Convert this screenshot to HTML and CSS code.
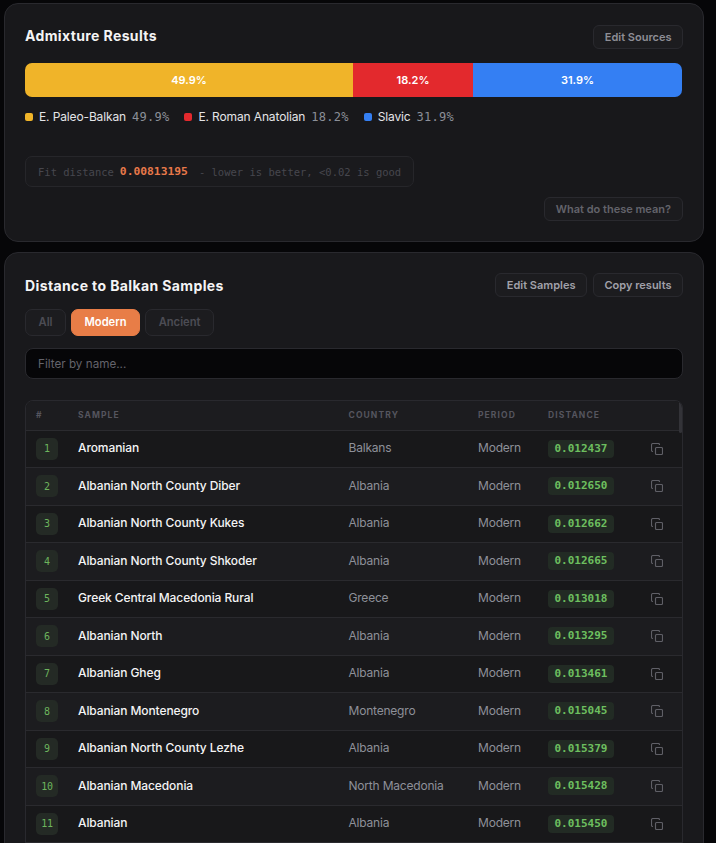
FILE: index.html
```html
<!DOCTYPE html>
<html lang="en">
<head>
<meta charset="utf-8">
<title>Admixture Results</title>
<link rel="stylesheet" href="styles.css">
</head>
<body>
<svg class="defs" width="0" height="0"><defs><g id="copy"><rect x="4.5" y="4.5" width="7" height="7" rx="1"/><path d="M2 8.5H1.8A1.3 1.3 0 0 1 .5 7.2V2A1.5 1.5 0 0 1 2 .5H7.2A1.3 1.3 0 0 1 8.5 1.8V2"/></g></defs></svg>
<main class="page">
  <section class="card card-results">
    <header class="card-head">
      <h2>Admixture Results</h2>
      <button class="btn">Edit Sources</button>
    </header>
    <div class="bar">
      <div class="seg seg-y">49.9%</div>
      <div class="seg seg-r">18.2%</div>
      <div class="seg seg-b">31.9%</div>
    </div>
    <ul class="legend">
      <li><i class="dot dot-y"></i>E. Paleo-Balkan <b>49.9%</b></li>
      <li><i class="dot dot-r"></i>E. Roman Anatolian <b>18.2%</b></li>
      <li><i class="dot dot-b"></i>Slavic <b>31.9%</b></li>
    </ul>
    <div class="fit">Fit distance <strong>0.00813195</strong> <span>- lower is better, &lt;0.02 is good</span></div>
    <div class="help"><button class="btn btn-dim">What do these mean?</button></div>
  </section>
  <section class="card card-samples">
    <header class="card-head">
      <h2>Distance to Balkan Samples</h2>
      <div class="actions"><button class="btn btn-bright">Edit Samples</button><button class="btn btn-bright">Copy results</button></div>
    </header>
    <div class="tabs"><button class="tab">All</button><button class="tab tab-on">Modern</button><button class="tab">Ancient</button></div>
    <input class="filter" placeholder="Filter by name...">
    <div class="table-wrap">
      <div class="scroll"></div>
      <table>
        <colgroup><col class="c1"><col class="c2"><col class="c3"><col class="c4"><col class="c5"><col></colgroup>
        <thead><tr><th>#</th><th>Sample</th><th>Country</th><th>Period</th><th>Distance</th><th></th></tr></thead>
        <tbody>
          <tr><td><span class="rank">1</span></td><td class="name">Aromanian</td><td>Balkans</td><td>Modern</td><td class="dist-cell"><span class="dist">0.012437</span></td><td><svg class="ico" viewBox="0 0 12 12"><use href="#copy"/></svg></td></tr>
          <tr><td><span class="rank">2</span></td><td class="name">Albanian North County Diber</td><td>Albania</td><td>Modern</td><td class="dist-cell"><span class="dist">0.012650</span></td><td><svg class="ico" viewBox="0 0 12 12"><use href="#copy"/></svg></td></tr>
          <tr><td><span class="rank">3</span></td><td class="name">Albanian North County Kukes</td><td>Albania</td><td>Modern</td><td class="dist-cell"><span class="dist">0.012662</span></td><td><svg class="ico" viewBox="0 0 12 12"><use href="#copy"/></svg></td></tr>
          <tr><td><span class="rank">4</span></td><td class="name">Albanian North County Shkoder</td><td>Albania</td><td>Modern</td><td class="dist-cell"><span class="dist">0.012665</span></td><td><svg class="ico" viewBox="0 0 12 12"><use href="#copy"/></svg></td></tr>
          <tr><td><span class="rank">5</span></td><td class="name">Greek Central Macedonia Rural</td><td>Greece</td><td>Modern</td><td class="dist-cell"><span class="dist">0.013018</span></td><td><svg class="ico" viewBox="0 0 12 12"><use href="#copy"/></svg></td></tr>
          <tr><td><span class="rank">6</span></td><td class="name">Albanian North</td><td>Albania</td><td>Modern</td><td class="dist-cell"><span class="dist">0.013295</span></td><td><svg class="ico" viewBox="0 0 12 12"><use href="#copy"/></svg></td></tr>
          <tr><td><span class="rank">7</span></td><td class="name">Albanian Gheg</td><td>Albania</td><td>Modern</td><td class="dist-cell"><span class="dist">0.013461</span></td><td><svg class="ico" viewBox="0 0 12 12"><use href="#copy"/></svg></td></tr>
          <tr><td><span class="rank">8</span></td><td class="name">Albanian Montenegro</td><td>Montenegro</td><td>Modern</td><td class="dist-cell"><span class="dist">0.015045</span></td><td><svg class="ico" viewBox="0 0 12 12"><use href="#copy"/></svg></td></tr>
          <tr><td><span class="rank">9</span></td><td class="name">Albanian North County Lezhe</td><td>Albania</td><td>Modern</td><td class="dist-cell"><span class="dist">0.015379</span></td><td><svg class="ico" viewBox="0 0 12 12"><use href="#copy"/></svg></td></tr>
          <tr><td><span class="rank">10</span></td><td class="name">Albanian Macedonia</td><td>North Macedonia</td><td>Modern</td><td class="dist-cell"><span class="dist">0.015428</span></td><td><svg class="ico" viewBox="0 0 12 12"><use href="#copy"/></svg></td></tr>
          <tr><td><span class="rank">11</span></td><td class="name">Albanian</td><td>Albania</td><td>Modern</td><td class="dist-cell"><span class="dist">0.015450</span></td><td><svg class="ico" viewBox="0 0 12 12"><use href="#copy"/></svg></td></tr>
        </tbody>
      </table>
    </div>
  </section>
</main>
</body>
</html>
```
FILE: styles.css
```css
* { box-sizing: border-box; }
html, body { margin: 0; height: 843px; overflow: hidden; background: #060608; }
body { font-family: Inter, "Noto Sans", sans-serif; color: #f4f4f5; }
.defs { position: absolute; }
.page { display: flex; flex-direction: column; gap: 10px; padding: 3px 12px 0 4px; }
.card { background: #18181b; border: 1px solid #29292e; border-radius: 14px; padding: 20px; }
.card-results { height: 239px; }
.card-samples { background: #19191c; }
.card-head { display: flex; justify-content: space-between; align-items: center; height: 24px; }
.card-results .card-head { margin-top: 1px; }
.card-results h2 { margin-top: -3px; }
h2 { margin: 0; font-size: 14px; font-weight: 700; letter-spacing: .38px; color: #f4f4f5; }
.btn { font: 600 11px/1 Inter, sans-serif; height: 24px; padding: 0 10.5px; border: 1px solid #29292e; border-radius: 6px; background: #1c1c1f; color: #8e8e96; }
.btn-dim { padding: 0 11px; color: #63636b; background: #1b1b1e; }
.btn-bright { color: #a1a1aa; }
.actions { display: flex; gap: 6px; }
.bar { display: flex; height: 34px; margin: 14px 1px 0 0; border-radius: 7px; overflow: hidden; }
.seg { display: flex; align-items: center; justify-content: center; font-size: 11px; font-weight: 600; color: #fff; }
.seg-y { width: 328px; background: #f0b429; }
.seg-r { width: 120px; background: #e3292d; }
.seg-b { flex: 1; background: #347ff3; }
.legend { display: flex; gap: 15px; margin: 12px 0 0; padding: 0; list-style: none; font-size: 12px; line-height: 16px; letter-spacing: -.13px; color: #e4e4e7; }
.legend li { display: flex; align-items: center; }
.legend b { margin-left: 6px; font: 400 12px "DejaVu Sans Mono", monospace; color: #8b8f98; letter-spacing: .25px; }
.dot { width: 8px; height: 8px; border-radius: 2px; margin-right: 6px; }
.dot-y { background: #f0b429; }
.dot-r { background: #e3292d; }
.dot-b { background: #347ff3; }
.fit { width: fit-content; margin-top: 31px; height: 31px; display: flex; align-items: center; padding: 0 11.5px 0 12px; border: 1px solid #26262a; border-radius: 7px; background: #1a1a1d; font: 400 10.5px "DejaVu Sans Mono", monospace; color: #47474e; }
.fit strong { margin: 0 11px 0 6px; color: #e8794a; font-size: 11.3px; font-weight: 700; }
.help { display: flex; justify-content: flex-end; margin-top: 10px; }
.tabs { display: flex; gap: 5px; margin-top: 12px; }
.tab { font: 600 11.2px/1 Inter, sans-serif; height: 27px; padding: 0 12.5px; border: 1px solid #29292e; border-radius: 7px; background: #1c1c1f; color: #4c4c54; }
.tab-on { background: #e87d47; border-color: #e87d47; color: #fff; }
.filter { display: block; width: 100%; height: 31px; margin-top: 12px; padding: 0 12px; font: 400 11.7px Inter, sans-serif; background: #060608; color: #fff; border: 1px solid #29292e; border-radius: 8px; outline: 0; }
.filter::placeholder { color: #63636b; opacity: 1; }
.table-wrap { position: relative; height: 480px; margin-top: 21px; border: 1px solid #29292e; border-radius: 8px; overflow: hidden; }
.scroll { position: absolute; top: 0; right: 0; width: 3px; height: 32px; background: #333338; border-radius: 2px; }
table { width: 100%; border-collapse: collapse; table-layout: fixed; font-size: 12px; letter-spacing: -.2px; }
.c1 { width: 42px; } .c2 { width: 270.5px; } .c3 { width: 129.5px; } .c4 { width: 70px; } .c5 { width: 100px; }
thead tr { background: #1c1c1f; }
th { height: 29px; padding: 0 0 1px 10px; text-align: left; font-size: 8.5px; font-weight: 700; letter-spacing: 1.1px; text-transform: uppercase; color: #55555e; border-bottom: 1px solid #2b2b2f; }
td { height: 37.5px; padding: 0 0 2px 10px; color: #8e9099; border-bottom: 1px solid #2a2a2e; }
td:first-child, td.dist-cell { padding-bottom: 0; }
tbody tr { background: #18181a; }
tbody tr:nth-child(even) { background: #1c1c1f; }
.name { font-weight: 500; letter-spacing: -.1px; color: #f4f4f5; }
.rank { display: flex; align-items: center; justify-content: center; width: 22px; height: 22px; border-radius: 5px; background: #242a25; color: #6db55d; font: 400 10px "DejaVu Sans Mono", monospace; }
.dist { display: inline-block; vertical-align: top; padding: 0 6.5px; height: 18px; border-radius: 4px; background: #222b24; color: #6dbf5f; font: 700 11px/18px "DejaVu Sans Mono", monospace; letter-spacing: 0; }
.ico { display: block; width: 12px; height: 12px; margin-left: 3px; margin-top: 2px; fill: none; stroke: #5f5f66; stroke-width: 1.15; }
```
